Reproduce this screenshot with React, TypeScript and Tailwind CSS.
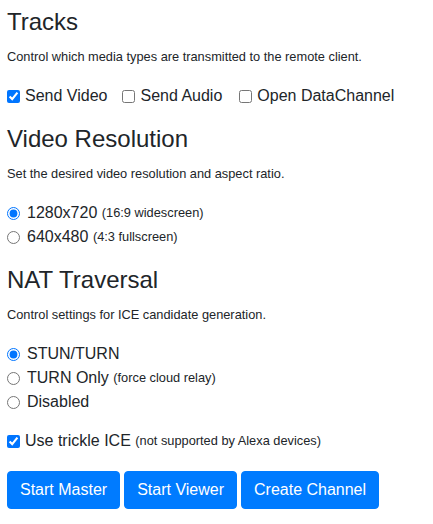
import React from 'react'

const font = { fontFamily: '"Liberation Sans", Arial, sans-serif' }

function Heading({ children }: { children: React.ReactNode }) {
  return <h4 className="text-[24px] leading-[29px] font-normal text-[#212529]">{children}</h4>
}

function Desc({ children }: { children: React.ReactNode }) {
  return <p className="mt-[11px] mb-[18px] text-[12.8px] leading-[19px] text-[#212529]">{children}</p>
}

function Check({ label, note, checked, className = '' }: { label: string; note?: string; checked?: boolean; className?: string }) {
  return (
    <label className={`flex items-center h-[24px] ${className}`}>
      <input type="checkbox" defaultChecked={checked} className="m-0 w-[13px] h-[13px]" />
      <span className="ml-[5px] text-[16px]">{label}</span>
      {note && <span className="ml-[4.5px] text-[12.8px]">{note}</span>}
    </label>
  )
}

function Radio({ name, label, note, checked }: { name: string; label: string; note?: string; checked?: boolean }) {
  return (
    <label className="flex items-center h-[24px]">
      <input type="radio" name={name} defaultChecked={checked} className="m-0 w-[13px] h-[13px]" />
      <span className="ml-[7px] text-[16px]">{label}</span>
      {note && <span className="ml-[4.5px] text-[12.8px]">{note}</span>}
    </label>
  )
}

export default function App() {
  return (
    <div className="px-[7px] pt-[7px] bg-white text-[#212529] min-h-screen" style={font}>
      {/* Tracks */}
      <Heading>Tracks</Heading>
      <Desc>Control which media types are transmitted to the remote client.</Desc>
      <div className="flex items-center">
        <Check label="Send Video" checked />
        <Check label="Send Audio" className="ml-[15px]" />
        <Check label="Open DataChannel" className="ml-[17px]" />
      </div>

      {/* Video resolution */}
      <div className="mt-[16px]">
        <Heading>Video Resolution</Heading>
        <Desc>Set the desired video resolution and aspect ratio.</Desc>
        <Radio name="res" label="1280x720" note="(16:9 widescreen)" checked />
        <Radio name="res" label="640x480" note="(4:3 fullscreen)" />
      </div>

      {/* NAT traversal */}
      <div className="mt-[16px]">
        <Heading>NAT Traversal</Heading>
        <Desc>Control settings for ICE candidate generation.</Desc>
        <Radio name="nat" label="STUN/TURN" checked />
        <Radio name="nat" label="TURN Only" note="(force cloud relay)" />
        <Radio name="nat" label="Disabled" />
        <Check label="Use trickle ICE" note="(not supported by Alexa devices)" checked className="mt-[15px]" />
      </div>

      <div className="mt-[18px] flex gap-[4px]">
        {['Start Master', 'Start Viewer', 'Create Channel'].map((t) => (
          <button
            key={t}
            className="h-[38px] px-[12px] border border-[#007bff] rounded-[4px] bg-[#007bff] text-white text-[16px] leading-[24px]"
          >
            {t}
          </button>
        ))}
      </div>
    </div>
  )
}
